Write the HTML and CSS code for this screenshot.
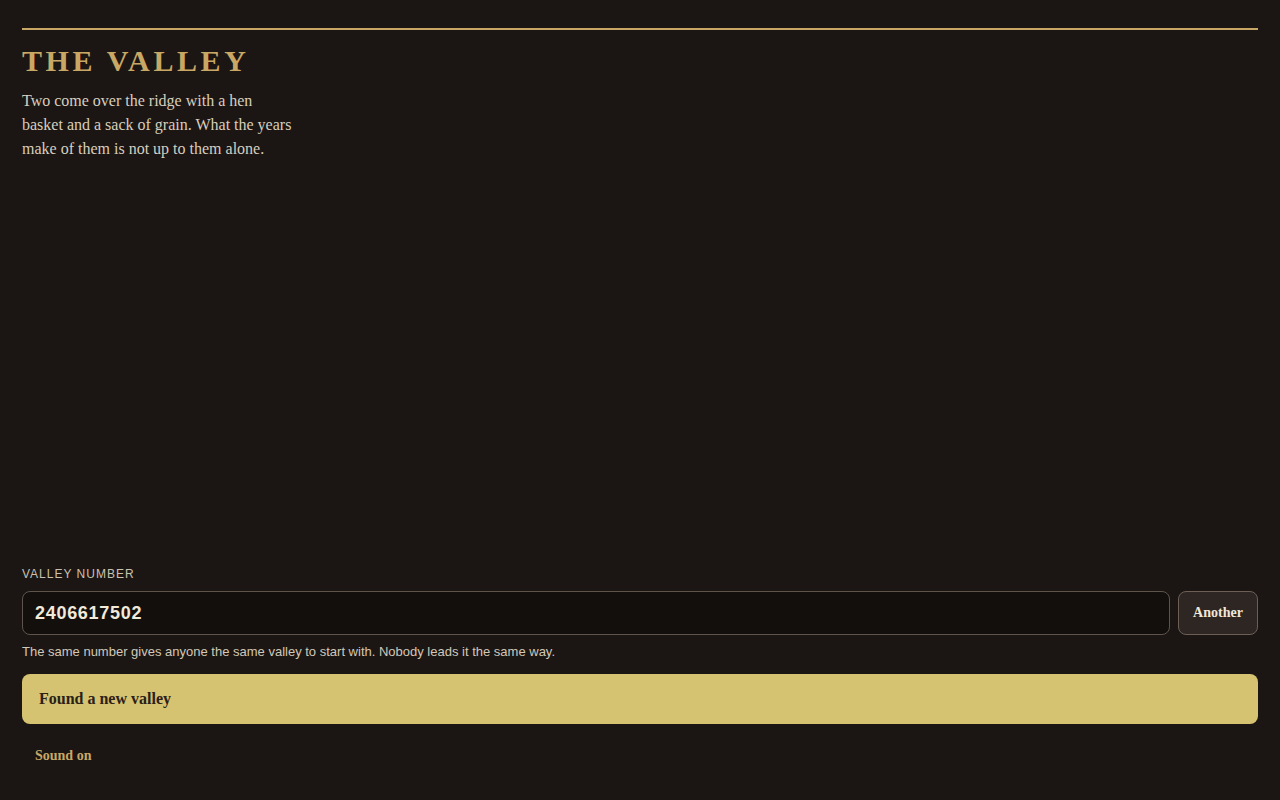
FILE: index.html
```html
<!DOCTYPE html>
<html lang="en">
<head>
<meta charset="utf-8">
<title>The Valley</title>
<link rel="stylesheet" href="styles.css">
</head>
<body>
<div class="page">
  <header class="header">
    <h1 class="title">THE VALLEY</h1>
    <p class="intro">Two come over the ridge with a hen basket and a sack of grain. What the years make of them is not up to them alone.</p>
  </header>
  <div class="stage"></div>
  <section class="controls">
    <label class="label" for="seed">VALLEY NUMBER</label>
    <div class="seed-row">
      <input class="seed-input" id="seed" type="text" value="2406617502">
      <button class="btn-another" type="button">Another</button>
    </div>
    <p class="hint">The same number gives anyone the same valley to start with. Nobody leads it the same way.</p>
    <button class="btn-found" type="button">Found a new valley</button>
    <button class="btn-sound" type="button">Sound on</button>
  </section>
</div>
</body>
</html>
```

FILE: styles.css
```css
* { box-sizing: border-box; }
html, body { margin: 0; padding: 0; }
body {
  background: #1b1613;
  color: #d9cfbf;
  font-family: "Liberation Serif", "Times New Roman", serif;
}
.page {
  height: 100vh;
  display: flex;
  flex-direction: column;
  padding: 28px 22px 26px;
}
.header {
  border-top: 2px solid #c8a664;
}
.title {
  margin: 14px 0 0;
  font-size: 30px;
  line-height: 33px;
  font-weight: bold;
  letter-spacing: 3.6px;
  color: #c9a764;
}
.intro {
  margin: 12px 0 0;
  width: 272px;
  font-size: 16px;
  line-height: 24px;
  color: #d8cebe;
}
.stage { flex: 1; }
.controls {
  display: flex;
  flex-direction: column;
  align-items: stretch;
}
.label {
  font-family: "Liberation Sans", Arial, sans-serif;
  font-size: 12px;
  line-height: 14px;
  letter-spacing: 1px;
  color: #cbc1b1;
  margin-bottom: 10px;
}
.seed-row {
  display: flex;
  gap: 8px;
  height: 44px;
}
.seed-input {
  flex: 1;
  min-width: 0;
  height: 44px;
  background: #130f0d;
  border: 1px solid #5e544c;
  border-radius: 8px;
  padding: 0 12px;
  font-family: "Liberation Sans", Arial, sans-serif;
  font-size: 18px;
  font-weight: bold;
  letter-spacing: 0.7px;
  color: #f1e9da;
  outline: none;
}
.btn-another {
  width: 80px;
  height: 44px;
  background: #2d2623;
  border: 1px solid #6b5f56;
  border-radius: 8px;
  font-family: "Liberation Serif", "Times New Roman", serif;
  font-size: 14px;
  font-weight: bold;
  color: #f1e7d7;
  padding: 0;
}
.hint {
  margin: 9px 0 0;
  font-family: "Liberation Sans", Arial, sans-serif;
  font-size: 13px;
  color: #d2c8b8;
}
.btn-found {
  margin-top: 15px;
  height: 50px;
  background: #d6c371;
  border: none;
  border-radius: 8px;
  text-align: left;
  padding: 0 17px;
  font-family: "Liberation Serif", "Times New Roman", serif;
  font-size: 16px;
  font-weight: bold;
  color: #2a2118;
}
.btn-sound {
  align-self: flex-start;
  margin-top: 14px;
  background: transparent;
  border: none;
  padding: 10px 13px;
  font-family: "Liberation Serif", "Times New Roman", serif;
  font-size: 14px;
  font-weight: bold;
  color: #c9a764;
}
```
